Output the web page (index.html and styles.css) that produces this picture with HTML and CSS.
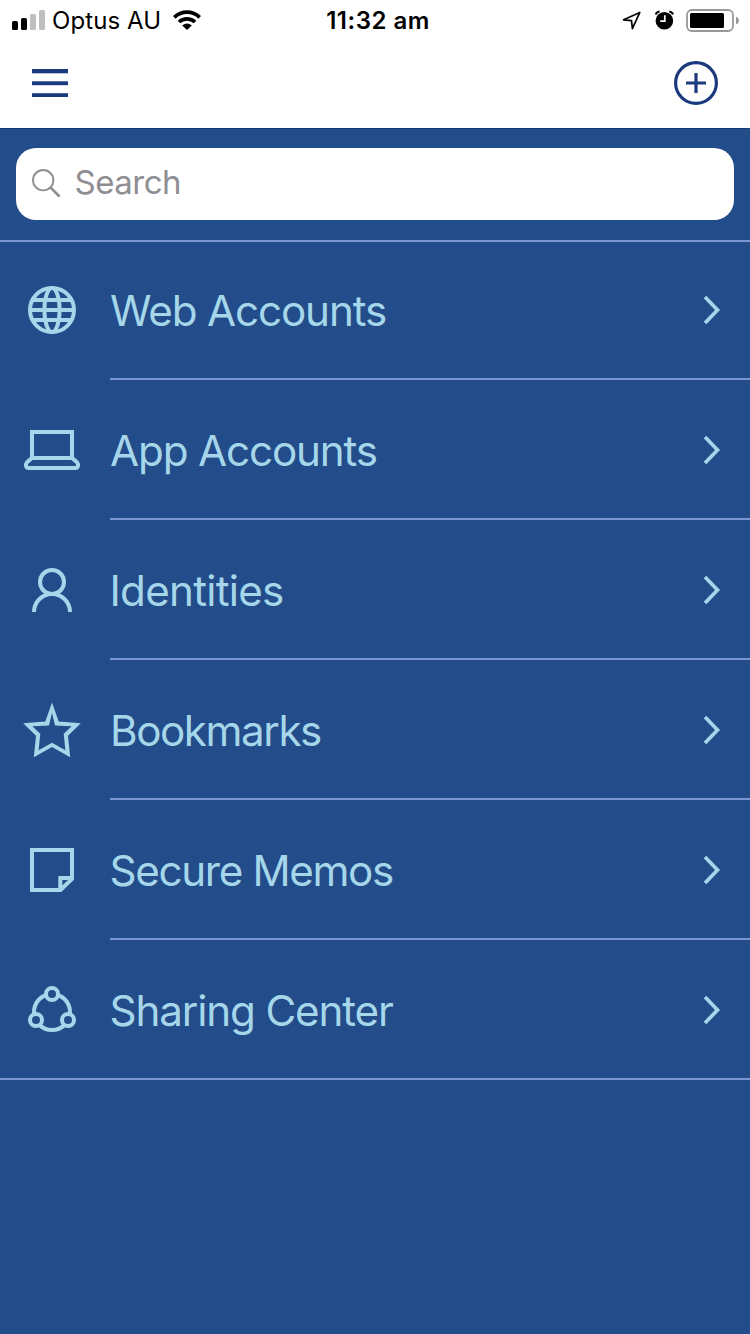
FILE: index.html
```html
<!DOCTYPE html>
<html lang="en">
<head>
<meta charset="utf-8">
<title>Accounts</title>
<link rel="stylesheet" href="styles.css">
</head>
<body>
<div class="app">
  <header class="header">
    <div class="status">
      <div class="status-left">
        <svg class="signal" width="33" height="20" viewBox="0 0 33 20"><rect y="11" width="6" height="9" rx="1.6"/><rect x="9" y="8" width="6" height="12" rx="1.6"/><g fill="#bfbfbf"><rect x="18" y="4" width="6" height="16" rx="1.6"/><rect x="27" width="6" height="20" rx="1.6"/></g></svg>
        <span class="carrier">Optus AU</span>
        <svg class="wifi" width="28" height="20" viewBox="0 0 28 20"><path d="M14 20L9.2 15.4A7 7 0 0 1 18.8 15.4Z"/><g fill="none" stroke="#000" stroke-width="3.7"><path d="M1.3 7.3A18.4 18.4 0 0 1 26.7 7.3"/><path d="M6 12A11.6 11.6 0 0 1 22 12"/></g></svg>
      </div>
      <span class="time">11:32 am</span>
      <div class="status-right">
        <svg width="19" height="19" viewBox="0 0 19 19"><path d="M17.8 1.4L1.6 8.8L9.5 9.6L10.4 17.6Z" fill="none" stroke="#000" stroke-width="1.7" stroke-linejoin="round"/></svg>
        <svg class="alarm" width="20" height="20" viewBox="0 0 20 20"><circle cx="10.4" cy="10.7" r="8.8"/><path d="M1.7 4.4Q2.4 1.8 5.6 1.4M19.1 4.4Q18.2 1.8 15.2 1.4" fill="none" stroke="#000" stroke-width="2"/><path d="M10.8 5.2V11.2H6.2" fill="none" stroke="#fff" stroke-width="1.7"/></svg>
        <svg class="battery" width="53" height="23" viewBox="0 0 53 23"><rect x="1" y="1" width="46" height="21" rx="5" fill="none" stroke="#999" stroke-width="1.8"/><rect x="4" y="4" width="34" height="15" rx="1.5"/><path d="M50 7.5Q53 9 53 11.5Q53 14 50 15.5Z" fill="#999"/></svg>
      </div>
    </div>
    <div class="navbar">
      <svg width="36" height="28" viewBox="0 0 36 28" fill="#1b3a7e"><rect width="36" height="4.3"/><rect y="12.3" width="36" height="3.9"/><rect y="24.2" width="36" height="3.8"/></svg>
      <svg width="44" height="44" viewBox="0 0 44 44" fill="none" stroke="#1b3a7e" stroke-width="3.2"><circle cx="22" cy="22" r="20.4"/><path d="M12 22H32M22 12V32"/></svg>
    </div>
  </header>
  <div class="search-panel">
    <div class="search">
      <svg width="30" height="30" viewBox="0 0 30 30" fill="none" stroke="#8e8e93"><circle cx="11.2" cy="11.2" r="10.2" stroke-width="1.9"/><path d="M18.6 18.6L26.8 26.8" stroke-width="2.7" stroke-linecap="round"/></svg>
      <span class="placeholder">Search</span>
    </div>
  </div>
  <ul class="list">
    <li class="row">
      <svg class="icon" viewBox="0 0 56 56"><circle cx="28" cy="28" r="22"/><ellipse cx="28" cy="28" rx="7.6" ry="22"/><path d="M9 18H47M6 28H50M9 38H47"/></svg>
      <div class="cell"><span class="label web">Web Accounts</span><svg class="chevron" viewBox="0 0 18 30"><path d="M3 2L15.5 15L3 28"/></svg></div>
    </li>
    <li class="row">
      <svg class="icon" viewBox="0 0 56 56"><path d="M8 36V10H48V36ZM8 36L3 40.3C1 42.3 2 46 4.5 46H51.5C54 46 55 42.3 53 40.3L48 36"/></svg>
      <div class="cell"><span class="label apps">App Accounts</span><svg class="chevron" viewBox="0 0 18 30"><path d="M3 2L15.5 15L3 28"/></svg></div>
    </li>
    <li class="row">
      <svg class="icon" viewBox="0 0 56 56"><circle cx="28" cy="20" r="12"/><path d="M10 50A18 18 0 0 1 46 50"/></svg>
      <div class="cell"><span class="label identities">Identities</span><svg class="chevron" viewBox="0 0 18 30"><path d="M3 2L15.5 15L3 28"/></svg></div>
    </li>
    <li class="row">
      <svg class="icon" viewBox="0 0 56 56"><path class="solid" fill-rule="evenodd" d="M28 .5L34.7 19.6L56.8 21.3L44 33.7L46.2 55.2L28 45L9.8 55.2L12 33.7L-.8 21.3L21.3 19.6ZM28 10.7L25 23.4L8.3 24.3L16.3 31.7L14.6 48.3L28 40.7L41.4 48.3L39.7 31.7L47.7 24.3L31 23.4Z"/></svg>
      <div class="cell"><span class="label bookmarks">Bookmarks</span><svg class="chevron" viewBox="0 0 18 30"><path d="M3 2L15.5 15L3 28"/></svg></div>
    </li>
    <li class="row">
      <svg class="icon" viewBox="0 0 56 56"><path d="M8 8H48V37L36.5 48H8ZM36.3 48V36H48"/></svg>
      <div class="cell"><span class="label memos">Secure Memos</span><svg class="chevron" viewBox="0 0 18 30"><path d="M3 2L15.5 15L3 28"/></svg></div>
    </li>
    <li class="row">
      <svg class="icon" viewBox="0 0 56 56"><circle cx="28" cy="30" r="18"/><g class="node"><circle cx="28" cy="12" r="6"/><circle cx="12" cy="38" r="6"/><circle cx="44" cy="38" r="6"/></g></svg>
      <div class="cell"><span class="label sharing">Sharing Center</span><svg class="chevron" viewBox="0 0 18 30"><path d="M3 2L15.5 15L3 28"/></svg></div>
    </li>
  </ul>
</div>
</body>
</html>
```
FILE: styles.css
```css
* { box-sizing: border-box; }
body { margin: 0; background: #234c8a; font-family: Inter, "Liberation Sans", sans-serif; }
svg { display: block; flex: none; overflow: visible; }
.app { width: 750px; height: 1334px; background: #234c8a; overflow: hidden; }
.header { height: 128px; background: #fff; }
.status { height: 40px; display: grid; grid-template-columns: 1fr auto 1fr; align-items: center; padding: 0 11px 0 12px; color: #000; font-size: 24px; line-height: 38px; white-space: nowrap; }
.status-left { display: flex; align-items: center; height: 40px; }
.signal, .wifi { margin-bottom: 1px; }
.carrier { width: 109px; margin: 0 12px 0 7px; padding-top: 2px; letter-spacing: 0.1px; }
.time { font-weight: 600; letter-spacing: 0.5px; margin-left: 5px; padding-top: 2px; }
.status-right { display: flex; align-items: center; justify-content: flex-end; height: 39px; }
.alarm { margin: 0 12px 0 13px; }
.navbar { height: 88px; display: flex; align-items: center; justify-content: space-between; padding: 0 32px; margin-top: -1px; }
.search-panel { height: 112px; padding: 19px 16px 20px; border-top: 1px solid #183a70; }
.search { height: 72px; border-radius: 20px; background: #fff; display: flex; align-items: center; padding: 0 16px; gap: 12.5px; }
.placeholder { color: #8e8e93; font-size: 33px; line-height: 40px; font-weight: 400; letter-spacing: -0.5px; margin-top: -5px; }
.list { list-style: none; margin: 0; padding: 0; box-shadow: inset 0 2px #7b98d3; }
.row { height: 140px; display: flex; align-items: center; padding-left: 24px; }
.row:last-child { border-bottom: 2px solid #7b98d3; padding-top: 2px; }
.row:last-child .cell { border-bottom: 0; padding-bottom: 2px; }
.icon { width: 56px; height: 56px; fill: none; stroke: #a5d6e9; stroke-width: 4; }
.solid { fill: #a5d6e9; stroke: none; }
.node { fill: #234c8a; }
.cell { flex: 1; height: 140px; margin-left: 30px; padding: 2px 30px 0 0; border-bottom: 2px solid #7b98d3; display: flex; align-items: center; justify-content: space-between; }
.label { color: #a5d6e9; font-size: 42.2px; line-height: 56px; font-weight: 400; white-space: nowrap; padding-top: 2px; }
.web { letter-spacing: -1.15px; }
.apps { letter-spacing: -1.15px; }
.identities { letter-spacing: -0.75px; margin-left: -0.5px; }
.bookmarks { letter-spacing: -1.45px; }
.memos { letter-spacing: -1.35px; margin-left: -0.5px; }
.sharing { letter-spacing: -1.15px; margin-left: -0.5px; }
.chevron { width: 18px; height: 30px; fill: none; stroke: #a5d6e9; stroke-width: 3.7; }
```
